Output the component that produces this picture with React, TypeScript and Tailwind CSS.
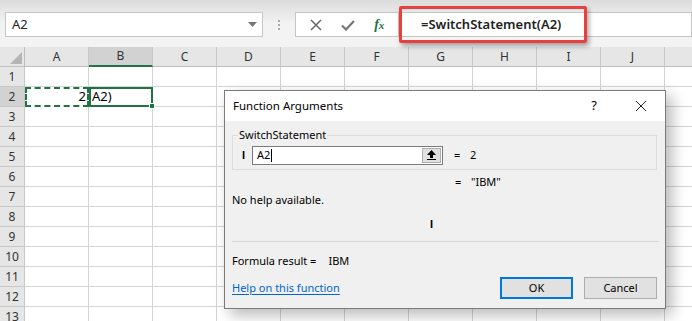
import React from "react";

const COLS = ["A", "B", "C", "D", "E", "F", "G", "H", "I", "J", ""];
const ROWS = Array.from({ length: 13 }, (_, i) => i + 1);

const ui = { fontFamily: '"Noto Sans", "Open Sans", sans-serif' };

const HeaderCell = ({ label, selected }: { label: string; selected?: boolean }) => (
  <div
    className={`w-16 shrink-0 h-5 flex items-center justify-center text-[12px] text-[#333] border-r border-[#c8c8c8] ${
      selected ? "bg-[#d2d2d2] border-b-2 border-b-[#217346]" : "bg-[#e6e6e6] border-b border-b-[#bdbdbd]"
    }`}
  >
    {label}
  </div>
);

const Cell = ({ row, col }: { row: number; col: string }) => {
  if (row === 2 && col === "A") {
    return (
      <div className="w-16 shrink-0 h-5 border-2 border-dashed border-[#217346] flex items-center justify-end pr-[1px] text-[13px] text-black">
        2
      </div>
    );
  }
  if (row === 2 && col === "B") {
    return (
      <div className="relative w-16 shrink-0 h-5 border-2 border-[#217346] flex items-center pl-[1px] text-[13px] text-black">
        A2)
        <span className="absolute -right-[4px] -bottom-[4px] w-[6px] h-[6px] bg-[#217346] border border-white" />
      </div>
    );
  }
  return <div className="w-16 shrink-0 h-5 border-r border-b border-[#d4d4d4] bg-white" />;
};

const Beam = () => (
  <span className="text-[11px] font-bold" style={{ fontFamily: '"Liberation Sans", Arial, sans-serif' }}>
    I
  </span>
);

export default function App() {
  return (
    <div className="relative w-[692px] h-[321px] overflow-hidden bg-white" style={ui}>
      {/* formula bar area */}
      <div className="h-[47px] bg-gradient-to-b from-[#dcdcdc] via-[#f3f3f3] to-[#f3f3f3] flex items-start pt-[12px] pl-[5px]">
        <div className="w-[258px] h-[25px] bg-white border border-[#c6c6c6] flex items-center justify-between pl-[6px] pr-[5px] text-[13px] text-[#222]">
          A2
          <svg width="9" height="5" viewBox="0 0 9 5">
            <path d="M0 0h9L4.5 5z" fill="#777" />
          </svg>
        </div>
        <div className="w-[32px] h-[25px] flex flex-col items-center justify-center gap-[2px]">
          <span className="w-[2px] h-[2px] bg-[#aaa]" />
          <span className="w-[2px] h-[2px] bg-[#aaa]" />
          <span className="w-[2px] h-[2px] bg-[#aaa]" />
        </div>
        <div className="w-[104px] h-[25px] bg-white border border-[#c6c6c6] flex items-center justify-around px-[4px]">
          <svg width="12" height="12" viewBox="0 0 12 12">
            <path d="M1 1l10 10M11 1L1 11" stroke="#666" strokeWidth="1.5" />
          </svg>
          <svg width="14" height="12" viewBox="0 0 14 12">
            <path d="M1 6.5l4 4L13 2" stroke="#777" strokeWidth="2.2" fill="none" />
          </svg>
          <span className="text-[14px] italic font-semibold text-[#217346]" style={{ fontFamily: '"Liberation Serif", serif' }}>
            f<span className="text-[11px]">x</span>
          </span>
        </div>
        <div className="flex-1 h-[25px] bg-white border border-[#c6c6c6] ml-[2px] flex items-center pl-[19px] text-[13px] font-semibold text-[#222]">
          =SwitchStatement(A2)
        </div>
      </div>

      {/* red highlight annotation */}
      <div className="absolute left-[399px] top-[6px] w-[188px] h-[37px] border-[3px] border-[#e8403d] rounded-[2px] shadow-[2px_3px_5px_rgba(0,0,0,0.35)]" />

      {/* column headers */}
      <div className="flex">
        <div className="w-[25px] shrink-0 h-5 bg-[#e6e6e6] border-r border-b border-[#bdbdbd] flex items-end justify-end p-[2px]">
          <svg width="12" height="12" viewBox="0 0 12 12">
            <path d="M12 0v12H0z" fill="#b4b4b4" />
          </svg>
        </div>
        {COLS.map((c, i) => (
          <HeaderCell key={i} label={c} selected={c === "B"} />
        ))}
      </div>

      {/* rows */}
      {ROWS.map((r) => (
        <div key={r} className="flex">
          <div
            className={`w-[25px] shrink-0 h-5 border-b border-r border-[#c8c8c8] flex items-center justify-center text-[12px] text-[#333] ${
              r === 2 ? "bg-[#d2d2d2]" : "bg-[#e6e6e6]"
            }`}
          >
            {r}
          </div>
          {COLS.map((c, i) => (
            <Cell key={i} row={r} col={c} />
          ))}
        </div>
      ))}

      {/* dialog */}
      <div className="absolute left-[224px] top-[90px] w-[442px] h-[219px] bg-[#f0f0f0] border border-[#7a7a7a] shadow-[6px_6px_14px_rgba(0,0,0,0.28)] flex flex-col text-[11px] text-black">
        <div className="h-[30px] bg-white flex items-center pl-[8px] pr-[18px] shrink-0">
          <span className="flex-1 text-[11.5px]">Function Arguments</span>
          <span className="text-[13px] mr-[38px]">?</span>
          <svg width="12" height="12" viewBox="0 0 12 12">
            <path d="M1 1l10 10M11 1L1 11" stroke="#222" strokeWidth="1" />
          </svg>
        </div>

        <div className="flex flex-col px-[7px] pt-[8px]">
          <fieldset className="border border-[#dcdcdc] h-[41px] px-[7px] pb-[3px] mr-[1px]">
            <legend className="px-[1px] ml-[-2px] text-[11px] leading-[12px]">SwitchStatement</legend>
            <div className="flex items-center h-[20px] mt-[4px]">
              <span className="w-[12px] pl-[2px]">
                <Beam />
              </span>
              <div className="w-[191px] h-[19px] bg-white border border-[#7a7a7a] flex items-center justify-between pl-[4px] pr-[1px]">
                <span className="text-[11px]">
                  A2<span className="inline-block w-[1px] h-[13px] bg-black align-middle ml-[1px]" />
                </span>
                <span className="w-[19px] h-[15px] bg-[#e1e1e1] border border-[#adadad] flex items-center justify-center">
                  <svg width="9" height="10" viewBox="0 0 9 10">
                    <path d="M4.5 0L9 5H6v3H3V5H0z M0 9h9v1H0z" fill="#000" />
                  </svg>
                </span>
              </div>
              <span className="ml-[11px] w-[16px]">=</span>
              <span>2</span>
            </div>
          </fieldset>

          <div className="flex h-[20px] items-center pl-[223px] mt-[2px]">
            <span className="w-[16px]">=</span>
            <span>"IBM"</span>
          </div>

          <div className="h-[17px] flex items-center">No help available.</div>
          <div className="h-[30px] flex items-center pl-[198px]">
            <Beam />
          </div>
          <div className="h-[1px] bg-[#d8d8d8] mr-[-1px] mt-[2px]" />

          <div className="h-[20px] flex items-center mt-[9px]">
            <span>Formula result =</span>
            <span className="ml-[12px]">IBM</span>
          </div>

          <div className="flex items-center justify-between mt-[6px]">
            <span className="text-[#0066cc] underline underline-offset-2">Help on this function</span>
            <div className="flex gap-[11px] mr-[1px]">
              <button className="w-[73px] h-[22px] bg-[#e1e1e1] border-2 border-[#0078d7] text-[11px]">OK</button>
              <button className="w-[73px] h-[22px] bg-[#e1e1e1] border border-[#adadad] text-[11px]">Cancel</button>
            </div>
          </div>
        </div>
      </div>
    </div>
  );
}
